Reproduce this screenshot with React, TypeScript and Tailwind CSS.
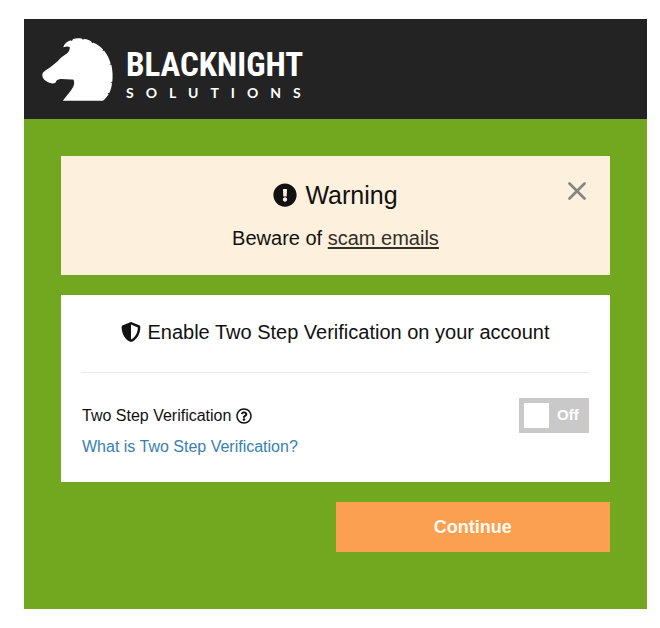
import { useState } from "react";
import { FaExclamationCircle, FaRegQuestionCircle, FaShieldAlt } from "react-icons/fa";

function HorseHead() {
  return (
    <svg viewBox="66 80 214 190" className="h-[63px] w-[71px] shrink-0 fill-white" aria-hidden="true">
      <path d="M130 108 C133 97 142 90 153 87 L156 90 L159 84 C166 81 178 80 187 82 L189 85 L193 83 C203 84 210 87 216 92 L216 96 L221 94 C233 99 243 106 250 115 L248 119 L253 118 C262 129 269 143 273 157 L269 160 L275 161 C279 178 280 196 278 212 L272 214 L277 216 C276 228 273 238 269 246 L263 247 L267 250 C262 258 257 264 250 269 L129 269 C142 251 157 238 162 222 C164 215 163 209 160 205 C145 206 132 203 121 204 C114 205 109 208 107 214 C101 219 91 217 83 213 C74 208 67 201 67 193 C66 185 73 180 81 175 C93 167 105 157 114 149 C121 140 132 133 142 126 C147 122 150 114 150 108 C145 105 140 104 130 108 Z" />
    </svg>
  );
}

function Logo() {
  return (
    <a href="/" className="flex items-center gap-[13px] text-white">
      <HorseHead />
      <span className="flex flex-col gap-1 pt-2">
        <span className="font-['Roboto_Condensed','Liberation_Sans_Narrow','Liberation_Sans',sans-serif] text-[33px] leading-9 font-bold">
          BLACKNIGHT
        </span>
        <span className="font-[Lato,sans-serif] text-sm leading-3 font-bold tracking-[12px]">
          SOLUTIONS
        </span>
      </span>
    </a>
  );
}

function WarningBanner({ onClose }: { onClose: () => void }) {
  return (
    <section className="relative bg-[#fdf0dc] px-5 py-[23px] text-center">
      <h2 className="flex items-center justify-center gap-2 text-[25px] leading-8">
        <FaExclamationCircle className="size-6" />
        Warning
      </h2>
      <p className="mt-[13px] text-xl leading-7">
        Beware of{" "}
        <a href="#scam-emails" className="text-[#332e28] underline underline-offset-2">
          scam emails
        </a>
      </p>
      <button
        type="button"
        onClick={onClose}
        aria-label="Close"
        className="absolute top-[26px] right-6 text-[#858585]"
      >
        <svg viewBox="0 0 18 18" className="size-[18px]" fill="none" stroke="currentColor" strokeWidth={2.7} strokeLinecap="round">
          <path d="M1.5 1.5l15 15M16.5 1.5l-15 15" />
        </svg>
      </button>
    </section>
  );
}

export default function App() {
  const [showWarning, setShowWarning] = useState(true);
  const [enabled, setEnabled] = useState(false);

  return (
    <div className="min-h-screen bg-white pt-[19px] pr-[13px] pb-[19px] pl-6 font-['Liberation_Sans',Arial,sans-serif] text-[#111]">
      <header className="flex h-[100px] items-center bg-[#232323] px-[18px]">
        <Logo />
      </header>

      <main className="flex flex-col gap-5 bg-[#72a820] px-[37px] pt-[37px] pb-[57px]">
        {showWarning && <WarningBanner onClose={() => setShowWarning(false)} />}

        <section className="bg-white px-[21px] pt-[23px] pb-[23px]">
          <h1 className="flex items-center justify-center gap-1.5 border-b border-[#e8e8e8] pb-[26px] text-xl leading-7">
            <FaShieldAlt className="size-5" />
            Enable Two Step Verification on your account
          </h1>

          <div className="flex items-start justify-between pt-[25px]">
            <div className="flex flex-col gap-[7px] pt-1.5 leading-6">
              <div className="flex items-center gap-[5px]">
                <label htmlFor="two-step">Two Step Verification</label>
                <FaRegQuestionCircle className="size-4" />
              </div>
              <a href="#two-step-help" className="text-[#3880b4]">
                What is Two Step Verification?
              </a>
            </div>

            <label className="flex h-[35px] w-[70px] cursor-pointer items-center gap-2 bg-[#c9c9c9] px-[5px] text-[15px] font-bold text-white has-checked:flex-row-reverse has-checked:bg-[#72a820]">
              <input
                id="two-step"
                type="checkbox"
                checked={enabled}
                onChange={(e) => setEnabled(e.target.checked)}
                className="sr-only"
              />
              <span className="size-[25px] bg-white" />
              {enabled ? "On" : "Off"}
            </label>
          </div>
        </section>

        <button type="button" className="h-[50px] w-1/2 self-end bg-[#fb9f50] text-lg font-bold text-[#fffaf0]">
          Continue
        </button>
      </main>
    </div>
  );
}
